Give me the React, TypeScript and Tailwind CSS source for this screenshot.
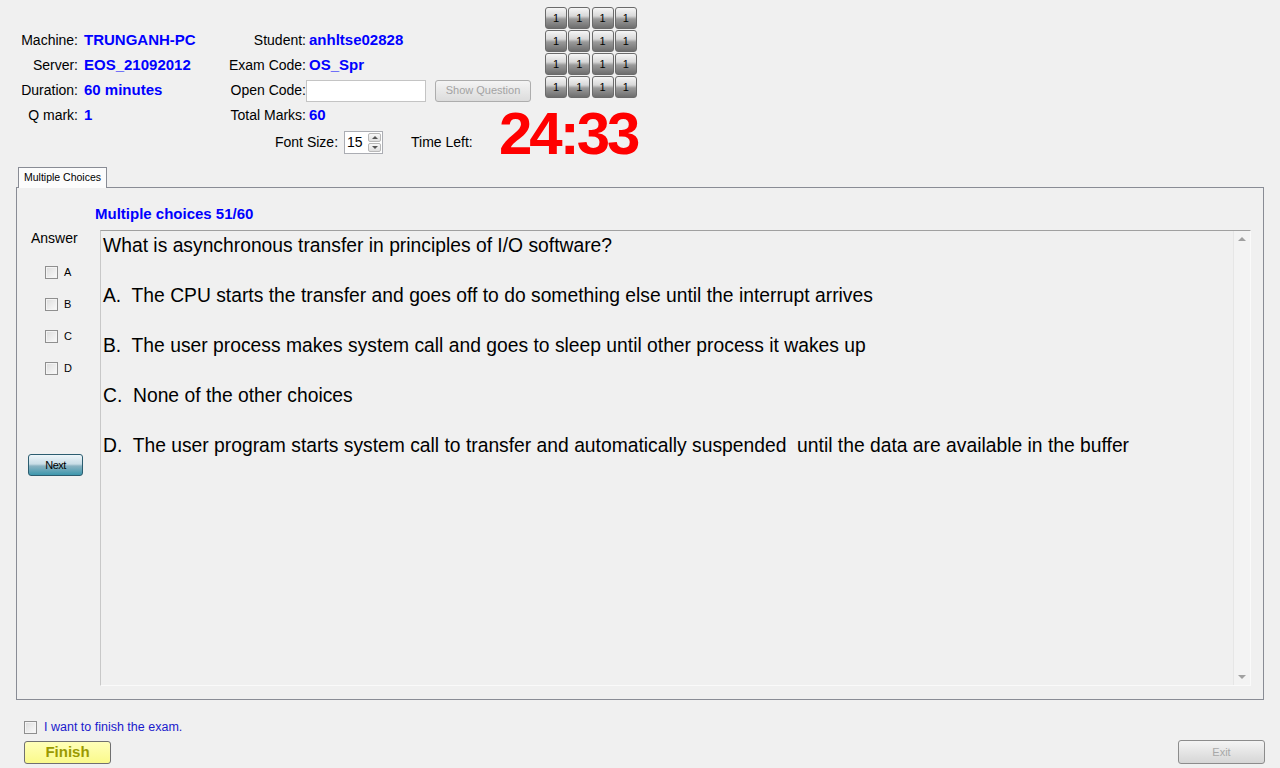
import { ReactNode } from "react";

const font = { fontFamily: '"Liberation Sans", Arial, sans-serif' };

const Label = ({ children }: { children: ReactNode }) => (
  <div className="h-[25px] flex items-center justify-end text-[14px] text-black">{children}</div>
);

const Value = ({ children }: { children: ReactNode }) => (
  <div className="h-[25px] flex items-center pl-[6px] text-[15px] font-bold text-[#0000ff]">{children}</div>
);

const CheckBox = () => (
  <div className="w-[13px] h-[13px] border border-[#8f8f8f] bg-gradient-to-br from-[#dcdcdc] to-[#fbfbfb] shadow-[inset_0_0_0_1px_#f4f4f4]" />
);

const GridButton = () => (
  <div className="w-[22px] h-[22px] rounded-[3px] border border-[#6b6b6b] bg-[linear-gradient(to_bottom,#f6f6f6_0%,#d8d8d8_40%,#9a9a9a_55%,#6e6e6e_100%)] flex items-center justify-center text-[11px] text-black">
    1
  </div>
);

const options = [
  "A.  The CPU starts the transfer and goes off to do something else until the interrupt arrives",
  "B.  The user process makes system call and goes to sleep until other process it wakes up",
  "C.  None of the other choices",
  "D.  The user program starts system call to transfer and automatically suspended  until the data are available in the buffer",
];

export default function App() {
  return (
    <div className="w-[1280px] h-[768px] bg-[#f0f0f0] overflow-hidden flex flex-col" style={font}>
      {/* Header */}
      <div className="h-[166px] flex shrink-0">
        <div className="w-[499px] flex flex-col pt-[28px]">
          <div className="flex">
            {/* left info column */}
            <div className="grid grid-cols-[78px_122px]">
              <Label>Machine:</Label>
              <Value>TRUNGANH-PC</Value>
              <Label>Server:</Label>
              <Value>EOS_21092012</Value>
              <Label>Duration:</Label>
              <Value>60 minutes</Value>
              <Label>Q mark:</Label>
              <Value>1</Value>
            </div>
            {/* second info column */}
            <div className="grid grid-cols-[106px_auto]">
              <Label>Student:</Label>
              <div className="h-[25px] flex items-center pl-[3px] text-[15px] font-bold text-[#0000ff]">anhltse02828</div>
              <Label>Exam Code:</Label>
              <div className="h-[25px] flex items-center pl-[3px] text-[15px] font-bold text-[#0000ff]">OS_Spr</div>
              <Label>Open Code:</Label>
              <div className="h-[25px] flex items-center">
                <div className="w-[120px] h-[22px] bg-white border border-[#c4c4c4]" />
                <div className="ml-[9px] w-[96px] h-[22px] rounded-[3px] border border-[#adadad] bg-gradient-to-b from-[#f4f4f4] to-[#dcdcdc] flex items-center justify-center text-[11px] text-[#a3a3a3]">
                  Show Question
                </div>
              </div>
              <Label>Total Marks:</Label>
              <div className="h-[25px] flex items-center pl-[3px] text-[15px] font-bold text-[#0000ff]">60</div>
            </div>
          </div>
          {/* font size row */}
          <div className="mt-[2px] h-[24px] flex items-center pl-[275px] text-[14px]">
            <span>Font Size:</span>
            <div className="ml-[6px] w-[39px] h-[23px] bg-white border border-[#abadb3] flex items-center">
              <span className="pl-[2px] flex-1 text-[14px]">15</span>
              <div className="w-[15px] h-full flex flex-col gap-[1px] p-[1px]">
                <div className="flex-1 border border-[#b8b8b8] rounded-[2px] bg-gradient-to-b from-[#f8f8f8] to-[#dedede] flex items-center justify-center">
                  <div className="w-0 h-0 border-l-[3px] border-r-[3px] border-b-[3px] border-l-transparent border-r-transparent border-b-[#555]" />
                </div>
                <div className="flex-1 border border-[#b8b8b8] rounded-[2px] bg-gradient-to-b from-[#f8f8f8] to-[#dedede] flex items-center justify-center">
                  <div className="w-0 h-0 border-l-[3px] border-r-[3px] border-t-[3px] border-l-transparent border-r-transparent border-t-[#555]" />
                </div>
              </div>
            </div>
            <span className="ml-[28px]">Time Left:</span>
          </div>
        </div>
        {/* right: button grid and timer */}
        <div className="w-[140px] flex flex-col">
          <div className="ml-[46px] mt-[7px] grid grid-cols-4 gap-[1px] w-[92px]">
            {Array.from({ length: 16 }).map((_, i) => (
              <GridButton key={i} />
            ))}
          </div>
          <div className="mt-[6px] text-[60px] leading-[60px] font-bold text-[#ff0000] tracking-[-3px]">24:33</div>
        </div>
      </div>

      {/* Tab control */}
      <div className="px-[16px] flex flex-col">
        <div className="flex">
          <div className="ml-[2px] h-[21px] px-[5px] bg-[#fcfcfc] border border-b-0 border-[#898c95] flex items-center text-[10.5px] text-black relative top-[1px]">
            Multiple Choices
          </div>
        </div>
        <div className="h-[513px] border border-[#898c95] bg-[#f0f0f0] flex flex-col">
          <div className="pt-[18px] pl-[78px] h-[34px] text-[15px] leading-[16px] font-bold text-[#0000ff]">
            Multiple choices 51/60
          </div>
          <div className="mt-[8px] flex">
            <div className="w-[83px] flex flex-col">
              <div className="pl-[14px] text-[14px] leading-[16px]">Answer</div>
              <div className="mt-[18px] pl-[28px] flex flex-col gap-[16px]">
                {["A", "B", "C", "D"].map((l) => (
                  <div key={l} className="h-[16px] flex items-center gap-[6px] text-[11px]">
                    <CheckBox />
                    <span>{l}</span>
                  </div>
                ))}
              </div>
              <div className="mt-[78px] ml-[11px] w-[55px] h-[22px] rounded-[3px] border border-[#2c5d70] bg-[linear-gradient(to_bottom,#eef6fa_0%,#c9dde6_45%,#8bb3c2_55%,#3d97ad_100%)] flex items-center justify-center text-[11px] text-black tracking-[-0.5px]">
                Next
              </div>
            </div>
            <div className="flex-1 mr-[12px] h-[456px] border-t border-l border-t-[#a0a0a0] border-l-[#c8c8c8] border-b border-r border-b-[#fafafa] border-r-[#fafafa] bg-[#f0f0f0] flex">
              <div className="flex-1 pl-[2px] pt-[2px] text-[19.3px] leading-[25px] text-black whitespace-pre">
                <p className="mb-[25px]">What is asynchronous transfer in principles of I/O software?</p>
                {options.map((o) => (
                  <p key={o} className="mb-[25px]">{o}</p>
                ))}
              </div>
              <div className="w-[17px] border-l border-[#e6e6e6] bg-[#f3f3f3] flex flex-col items-center justify-between py-[6px]">
                <div className="w-0 h-0 border-l-[4px] border-r-[4px] border-b-[4px] border-l-transparent border-r-transparent border-b-[#a0a0a0]" />
                <div className="w-0 h-0 border-l-[4px] border-r-[4px] border-t-[4px] border-l-transparent border-r-transparent border-t-[#a0a0a0]" />
              </div>
            </div>
          </div>
        </div>
      </div>

      {/* Bottom */}
      <div className="mt-[19px] pl-[24px] flex items-center h-[16px] gap-[7px]">
        <CheckBox />
        <span className="text-[12.5px] text-[#1a1acc]">I want to finish the exam.</span>
      </div>
      <div className="mt-[5px] pl-[24px] pr-[15px] flex justify-between items-start">
        <div className="mt-[1px] w-[87px] h-[23px] rounded-[3px] border border-[#707070] bg-gradient-to-b from-[#ffffb8] to-[#fafa8a] flex items-center justify-center text-[15px] font-bold text-[#9a9a00]">
          Finish
        </div>
        <div className="w-[87px] h-[24px] rounded-[3px] border border-[#8c8c8c] bg-gradient-to-b from-[#f4f4f4] to-[#d6d6d6] flex items-center justify-center text-[11px] text-[#a8a8a8]">
          Exit
        </div>
      </div>
    </div>
  );
}
